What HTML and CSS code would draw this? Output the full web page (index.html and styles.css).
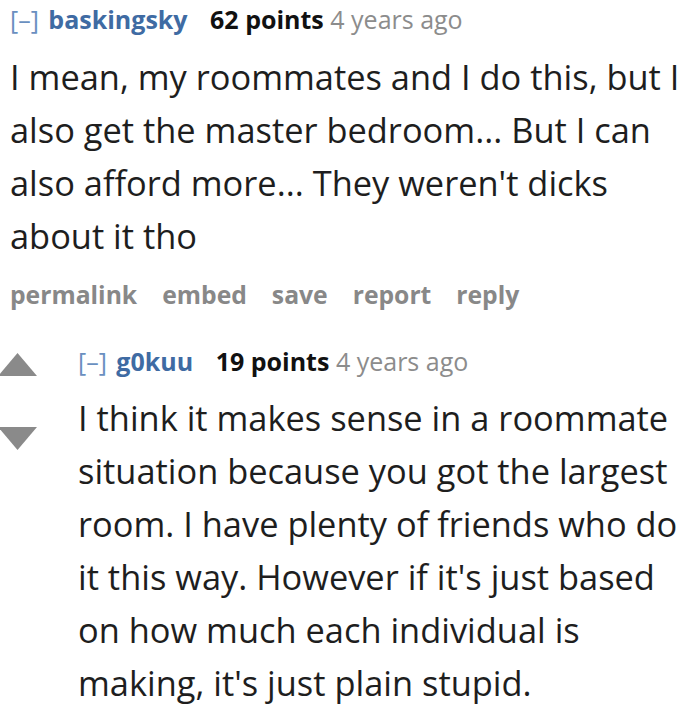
FILE: index.html
```html
<!DOCTYPE html>
<html>
<head>
<meta charset="utf-8">
<link rel="stylesheet" href="styles.css">
</head>
<body>
<div class="comment">
  <div class="tagline">
    <span class="expand">[–]</span>
    <span class="author">baskingsky</span>
    <span class="score">62 points</span>
    <span class="time">4 years ago</span>
  </div>
  <div class="md">I mean, my roommates and I do this, but I<br>also get the master bedroom... But I can<br>also afford more... They weren't dicks<br>about it tho</div>
  <ul class="buttons">
    <li>permalink</li>
    <li>embed</li>
    <li>save</li>
    <li>report</li>
    <li>reply</li>
  </ul>
</div>
<div class="child">
  <div class="votes">
    <svg class="arrow" width="40" height="23" viewBox="0 0 40 23"><polygon points="0,23 19.5,0 39,23" fill="#8a8a8a"/></svg>
    <svg class="arrow" width="40" height="23" viewBox="0 0 40 23"><polygon points="0,0 39,0 19.5,23" fill="#8a8a8a"/></svg>
  </div>
  <div class="comment nested">
    <div class="tagline">
      <span class="expand">[–]</span>
      <span class="author">g0kuu</span>
      <span class="score">19 points</span>
      <span class="time">4 years ago</span>
    </div>
    <div class="md">I think it makes sense in a roommate<br>situation because you got the largest<br>room. I have plenty of friends who do<br>it this way. However if it's just based<br>on how much each individual is<br>making, it's just plain stupid.</div>
  </div>
</div>
</body>
</html>
```
FILE: styles.css
```css
html, body {
  margin: 0;
  padding: 0;
  background: #fff;
}
body {
  font-family: "Open Sans", "Noto Sans", sans-serif;
  width: 700px;
  height: 712px;
  overflow: hidden;
}
.comment {
  padding-left: 10px;
}
.tagline {
  font-size: 25px;
  line-height: 38px;
  white-space: nowrap;
}
.expand {
  color: #6a8fc0;
  font-weight: 400;
  margin-right: 3px;
}
.author {
  color: #3f6ba3;
  font-weight: 700;
  margin-right: 16px;
}
.score {
  color: #111;
  font-weight: 700;
}
.time {
  color: #8c8c8c;
}
.md {
  font-size: 34.4px;
  line-height: 53px;
  color: #1e1e1e;
  margin-top: 12px;
  white-space: nowrap;
}
.buttons {
  list-style: none;
  margin: 16px 0 0;
  padding: 0;
  display: flex;
  gap: 25px;
  font-size: 24.7px;
  line-height: 34px;
  font-weight: 700;
  color: #888;
}
.child {
  display: flex;
  margin-top: 30px;
}
.votes {
  width: 70px;
  flex: none;
  display: flex;
  flex-direction: column;
  gap: 51px;
  margin-left: -2px;
  padding-top: 11px;
}
.nested {
  padding-left: 10px;
}
.nested .md {
  margin-top: 11px;
}
```
